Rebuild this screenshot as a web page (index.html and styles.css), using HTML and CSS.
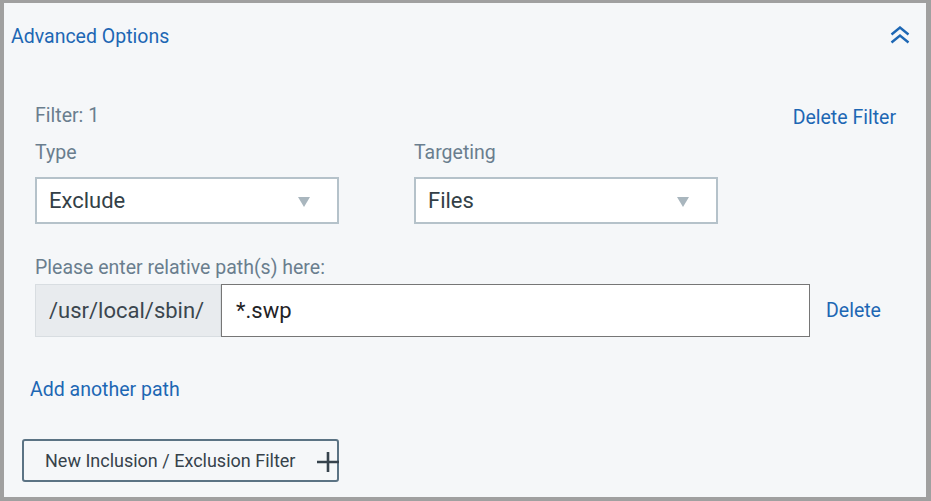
FILE: index.html
```html
<!DOCTYPE html>
<html>
<head>
<meta charset="utf-8">
<link rel="stylesheet" href="styles.css">
</head>
<body>
<div class="panel">
  <div class="header">
    <span class="title">Advanced Options</span>
    <svg class="chev" width="20" height="18" viewBox="0 0 20 18">
      <path d="M1.5 8.5 L10 1.5 L18.5 8.5 M1.5 16.5 L10 9.5 L18.5 16.5" fill="none" stroke="#1d67b4" stroke-width="2.4"/>
    </svg>
  </div>
  <div class="filter">
    <div class="filter-head">
      <span class="muted">Filter: 1</span>
      <span class="link del-filter">Delete Filter</span>
    </div>
    <div class="selects">
      <div class="field">
        <div class="muted">Type</div>
        <div class="select"><span>Exclude</span><span class="arrow"></span></div>
      </div>
      <div class="field">
        <div class="muted">Targeting</div>
        <div class="select"><span>Files</span><span class="arrow"></span></div>
      </div>
    </div>
    <div class="muted path-label">Please enter relative path(s) here:</div>
    <div class="path-row">
      <div class="prefix">/usr/local/sbin/</div>
      <div class="input">*.swp</div>
      <span class="link del">Delete</span>
    </div>
    <div class="link add">Add another path</div>
    <div class="btn">New Inclusion / Exclusion Filter
      <svg class="plus" width="22" height="22" viewBox="0 0 22 22">
        <path d="M0 11 H22 M11 1 V21" stroke="#36434d" stroke-width="2.6"/>
      </svg>
    </div>
  </div>
</div>
</body>
</html>
```
FILE: styles.css
```css
html, body {
  margin: 0;
  padding: 0;
}
body {
  width: 931px;
  height: 501px;
  font-family: Roboto, "Liberation Sans", sans-serif;
  background: #a0a0a0;
}
.panel {
  box-sizing: border-box;
  width: 931px;
  height: 501px;
  border-style: solid;
  border-color: #a0a0a0;
  border-width: 3px 5px 4px 4px;
  background: #f5f7f9;
  overflow: hidden;
}
.header {
  height: 66px;
  display: flex;
  align-items: center;
  justify-content: space-between;
  padding: 0 16px 0 7px;
}
.title {
  color: #1d67b4;
  font-size: 19.5px;
}
.chev {
  margin-top: -2px;
}
.link {
  color: #1d67b4;
  font-size: 19.5px;
}
.muted {
  color: #6a7e8e;
  font-size: 19.5px;
  line-height: 24px;
}
.filter {
  padding: 0 30px 0 31px;
}
.filter-head {
  margin-top: 35px;
  display: flex;
  justify-content: space-between;
  align-items: flex-start;
  height: 24px;
}
.del-filter {
  line-height: 24px;
  margin-top: 2px;
}
.selects {
  margin-top: 13px;
  display: flex;
  gap: 75px;
}
.field .muted {
  height: 24px;
}
.select {
  margin-top: 12px;
  box-sizing: border-box;
  width: 304px;
  height: 47px;
  border: 2px solid #b5c2ca;
  background: #fff;
  display: flex;
  align-items: center;
  justify-content: space-between;
  padding: 0 27px 0 12px;
  font-size: 22px;
  color: #333f47;
}
.arrow {
  width: 0;
  height: 0;
  border-left: 6.5px solid transparent;
  border-right: 6.5px solid transparent;
  border-top: 10px solid #a9b6be;
  margin-top: 2px;
}
.path-label {
  margin-top: 32px;
}
.path-row {
  margin-top: 4px;
  display: flex;
  align-items: center;
  height: 53px;
}
.prefix {
  box-sizing: border-box;
  width: 186px;
  height: 53px;
  background: #e8ebee;
  border: 1px solid #d8dde1;
  display: flex;
  align-items: center;
  padding-left: 13px;
  font-size: 22px;
  color: #3b464e;
}
.input {
  box-sizing: border-box;
  width: 589px;
  height: 53px;
  background: #fff;
  border: 1px solid #767676;
  display: flex;
  align-items: center;
  padding-left: 14px;
  font-size: 22px;
  color: #1f2326;
}
.del {
  margin-left: 16px;
}
.add {
  margin-top: 41px;
  margin-left: -5px;
  line-height: 24px;
}
.btn {
  margin-top: 37px;
  margin-left: -13px;
  box-sizing: border-box;
  width: 317px;
  height: 43px;
  border: 2px solid #5b7384;
  border-radius: 3px;
  display: flex;
  align-items: center;
  padding-left: 21px;
  font-size: 18px;
  color: #36424b;
  position: relative;
}
.plus {
  position: absolute;
  right: -2px;
  top: 10px;
}
```
